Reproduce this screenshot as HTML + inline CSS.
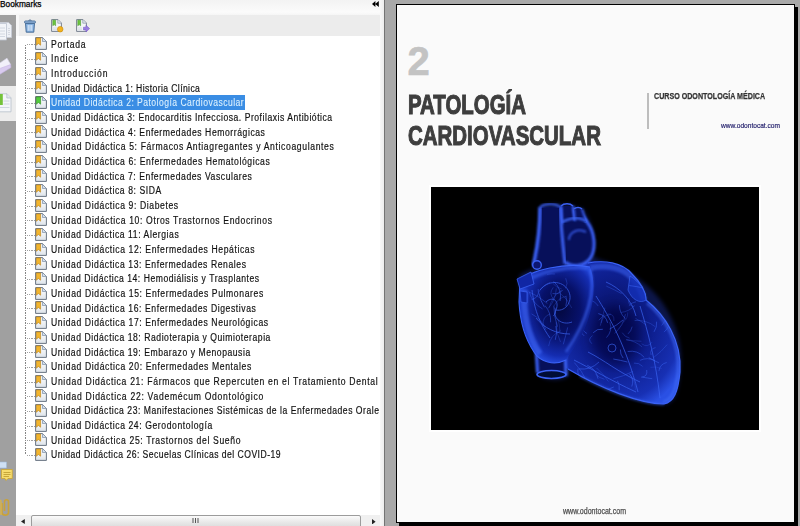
<!DOCTYPE html>
<html><head><meta charset="utf-8">
<style>
*{margin:0;padding:0;box-sizing:border-box}
html,body{width:800px;height:526px;overflow:hidden;background:#a9a9a9;font-family:"Liberation Sans",sans-serif}
.abs{position:absolute}
#title{left:0;top:0;width:380px;height:15px;background:linear-gradient(#f3f3f3,#fbfbfb 80%,#f6f6f6)}
#title .t{position:absolute;left:0;top:-1.2px;font-size:8.3px;color:#000;letter-spacing:0;white-space:nowrap;-webkit-text-stroke:0.25px #000}
#strip{left:0;top:15px;width:16px;height:511px;background:#a0a0a0}
#seltab{left:0;top:85.7px;width:16px;height:35.5px;background:#ececec}
#wline{left:16px;top:15px;width:2.5px;height:500px;background:#f7f7f7}
#toolbar{left:18.5px;top:15px;width:361.5px;height:20.5px;background:#ececec}
#list{left:16px;top:35.5px;width:364px;height:479.5px;background:#fff}
#rstrip{left:380px;top:0;width:4px;height:526px;background:linear-gradient(90deg,#f8f8f8,#ededed)}
#dline{left:383.6px;top:0;width:1.2px;height:526px;background:#747474}
.r{position:absolute;left:51.0px;font-size:10px;line-height:11px;color:#111;white-space:nowrap;-webkit-text-stroke:0.18px #111}
.r span{display:inline-block;transform-origin:0 0}
.r.sel{color:#dff3ff;-webkit-text-stroke:0.06px #dff3ff}
#hl{left:50px;top:95px;width:195.4px;height:14.5px;background:#3a8de4}
.ic{position:absolute;left:35.2px}
.hd{position:absolute;left:26.8px;width:8px;height:1px;background:repeating-linear-gradient(90deg,#a2a2a2 0 1.1px,transparent 1.1px 2.2px)}
#vd{position:absolute;left:25px;width:1px;background:repeating-linear-gradient(180deg,#858585 0 1.2px,transparent 1.2px 2.5px)}
#scroll{left:16px;top:515px;width:364px;height:11px;background:#f0f0f0}
#thumb{left:31.2px;top:515.4px;width:329.5px;height:14px;border:1px solid #9c9c9c;border-radius:2px;background:linear-gradient(#fbfbfb,#e9e9e9 50%,#d9d9d9)}
#page{left:396px;top:4px;width:399px;height:519px;border:1px solid #000;background:#fafafa}
#shr{left:795px;top:7px;width:3px;height:519px;background:#000}
#shb{left:399px;top:522.5px;width:399px;height:4px;background:#000}
.ptxt{position:absolute;white-space:nowrap;transform-origin:0 0}
</style></head><body>
<svg width="0" height="0" style="position:absolute">
<defs>
<linearGradient id="pgbg" x1="0" y1="0" x2="0" y2="1"><stop offset="0" stop-color="#fbfcfd"/><stop offset="0.55" stop-color="#eef1f4"/><stop offset="1" stop-color="#dde3ea"/></linearGradient>
<symbol id="bmo" viewBox="0 0 12 13">
<path d="M0.6,0.6 H7.6 L11.4,4.4 V12.4 H0.6 Z" fill="url(#pgbg)" stroke="#5a6676" stroke-width="0.9"/>
<path d="M7.5,0.7 V4.5 H11.3" fill="#d3e0ee" stroke="#7d8ca2" stroke-width="0.7"/>
<path d="M1.3,0.9 H5.6 V8.2 L3.45,6.5 L1.3,8.2 Z" fill="#f2b52e" stroke="#b27a12" stroke-width="0.6"/>
</symbol>
<symbol id="bmg" viewBox="0 0 12 13">
<path d="M0.6,0.6 H7.6 L11.4,4.4 V12.4 H0.6 Z" fill="url(#pgbg)" stroke="#4f5a68" stroke-width="0.9"/>
<path d="M7.5,0.7 V4.5 H11.3" fill="#d3e0ee" stroke="#7d8ca2" stroke-width="0.7"/>
<path d="M1.3,0.9 H5.6 V8.2 L3.45,6.5 L1.3,8.2 Z" fill="#52cc3c" stroke="#2c8a1c" stroke-width="0.6"/>
</symbol>
</defs>
</svg>

<div id="title" class="abs"><div class="t">Bookmarks</div>
<svg class="abs" style="left:372px;top:1.3px" width="7" height="6" viewBox="0 0 7 6"><path d="M0,3 L3.4,0 V6 Z M3.2,3 L6.8,0 V6 Z" fill="#000"/></svg>
</div>
<div id="strip" class="abs"></div>
<div id="seltab" class="abs"></div>
<div id="wline" class="abs"></div>
<div id="toolbar" class="abs"></div>
<div id="list" class="abs"></div>
<div id="rstrip" class="abs"></div>
<div id="dline" class="abs"></div>

<!-- left strip icons -->
<svg class="abs" style="left:0;top:22px" width="13" height="19" viewBox="0 0 13 19">
<path d="M-2,0.5 H8.5 L11.5,3.5 V15.5 H-2 Z" fill="#eef1f6" stroke="#c6ccd6" stroke-width="0.8"/>
<path d="M-3,1.5 H6.5 V18 H-3 Z" fill="#f3f5f9" stroke="#bcc3cf" stroke-width="0.8"/>
<path d="M-2,6 H5 M-2,9 H5 M-2,12 H5 M-2,14.5 H5" stroke="#c9d0dc" stroke-width="0.8"/>
<path d="M9,6 V13" stroke="#aeb6c4" stroke-width="0.8" stroke-dasharray="1 1"/>
</svg>
<svg class="abs" style="left:0;top:56px" width="12" height="22" viewBox="0 0 12 22">
<path d="M-3,9 L7,2.2 L10.6,8.4 L0,15.5 Z" fill="#f2f0fa" stroke="#dcd8ec" stroke-width="0.6"/>
<path d="M-3,13.5 L10.6,8.6 L10.9,11.6 L-3,20 Z" fill="#d9cbef" stroke="#c7b5e6" stroke-width="0.6"/>
</svg>
<svg class="abs" style="left:0;top:92.5px" width="13" height="20" viewBox="0 0 13 20">
<path d="M-2,0.8 H7 L11,4.8 V18.8 H-2 Z" fill="#f4f6f9" stroke="#b8c0cc" stroke-width="0.8"/>
<path d="M6.8,0.8 V5 H11" fill="#e2e7ef" stroke="#a8b2c0" stroke-width="0.6"/>
<path d="M-2,1 H2.8 V12 H-2 Z" fill="#74c23a"/>
<path d="M3.5,8 H9.5 M3.5,11 H9.5 M-2,14.5 H9.5" stroke="#c7cfdb" stroke-width="0.8"/>
</svg>
<svg class="abs" style="left:0;top:461px" width="14" height="20" viewBox="0 0 14 20">
<path d="M-1,1 H6.5 V7 H-1 Z" fill="#cfe0f4" stroke="#9fb8d8" stroke-width="0.6"/>
<path d="M1.5,8.5 H12.3 V17.5 H8 L6,19.5 L5,17.5 H1.5 Z" fill="#f6dc6e" stroke="#c9a431" stroke-width="0.8"/>
<path d="M3.5,11.5 H10.5 M3.5,13.5 H10.5 M3.5,15.5 H9" stroke="#b38f25" stroke-width="0.7"/>
</svg>
<svg class="abs" style="left:0;top:498px" width="12" height="20" viewBox="0 0 12 20">
<path d="M2,5 V14.5 C2,18 8.5,18 8.5,14.5 V4 C8.5,1 4.5,1 4.5,4 V13" fill="none" stroke="#c9a23a" stroke-width="1.6"/>
<path d="M-1,2.5 C1,2 1,2.5 1,4 V17" fill="none" stroke="#d6b24c" stroke-width="1.5"/>
</svg>

<!-- toolbar icons -->
<svg class="abs" style="left:24px;top:19px" width="12" height="14" viewBox="0 0 12 14">
<path d="M4.5,1.6 Q6,0.2 7.5,1.6" fill="none" stroke="#4e6f94" stroke-width="1"/>
<rect x="0.6" y="2" width="10.8" height="2.2" rx="0.8" fill="#9fc1e6" stroke="#3f6591" stroke-width="0.9"/>
<path d="M1.5,4.4 H10.5 L9.8,13.2 H2.2 Z" fill="#86b1e0" stroke="#3f6591" stroke-width="0.9"/>
<path d="M4.2,6 V11.8 M6,6 V11.8 M7.8,6 V11.8" stroke="#eef6ff" stroke-width="0.9"/>
</svg>
<svg class="abs" style="left:50.5px;top:18.8px" width="13" height="14" viewBox="0 0 13 14">
<path d="M0.6,0.6 H7 L10.4,4 V12.4 H0.6 Z" fill="#f3f5f8" stroke="#6b7585" stroke-width="0.9"/>
<path d="M6.8,0.7 V4.2 H10.3" fill="#dfe6ee" stroke="#8b96a6" stroke-width="0.7"/>
<path d="M1.8,1.2 H4.6 V6.8 L3.2,5.6 L1.8,6.8 Z" fill="#6cc63d" stroke="#3f8e22" stroke-width="0.5"/>
<path d="M1.8,9 H6 M1.8,10.8 H6" stroke="#c6ced8" stroke-width="0.7"/>
<circle cx="9.2" cy="10.2" r="2.8" fill="#f2b21e" stroke="#c68a0a" stroke-width="0.6"/>
</svg>
<svg class="abs" style="left:75.8px;top:18.8px" width="14" height="14" viewBox="0 0 14 14">
<path d="M0.6,0.6 H7 L10.4,4 V12.4 H0.6 Z" fill="#f3f5f8" stroke="#6b7585" stroke-width="0.9"/>
<path d="M6.8,0.7 V4.2 H10.3" fill="#dfe6ee" stroke="#8b96a6" stroke-width="0.7"/>
<path d="M1.8,1.2 H4.6 V6.8 L3.2,5.6 L1.8,6.8 Z" fill="#6cc63d" stroke="#3f8e22" stroke-width="0.5"/>
<path d="M1.8,9 H6 M1.8,10.8 H6" stroke="#c6ced8" stroke-width="0.7"/>
<path d="M7.5,8.2 H10 V6.2 L13.6,9.6 L10,13 V11 H7.5 Z" fill="#9a7ee0" stroke="#7152c4" stroke-width="0.5"/>
</svg>

<div id="hl" class="abs"></div>
<div id="vd" style="top:44.70px;height:410.76px"></div>
<div id="clip" class="abs" style="left:0;top:0;width:380px;height:515px;overflow:hidden">
<div class="hd" style="top:44.20px"></div>
<div class="hd" style="top:58.87px"></div>
<div class="hd" style="top:73.54px"></div>
<div class="hd" style="top:88.21px"></div>
<div class="hd" style="top:102.88px"></div>
<div class="hd" style="top:117.55px"></div>
<div class="hd" style="top:132.22px"></div>
<div class="hd" style="top:146.89px"></div>
<div class="hd" style="top:161.56px"></div>
<div class="hd" style="top:176.23px"></div>
<div class="hd" style="top:190.90px"></div>
<div class="hd" style="top:205.57px"></div>
<div class="hd" style="top:220.24px"></div>
<div class="hd" style="top:234.91px"></div>
<div class="hd" style="top:249.58px"></div>
<div class="hd" style="top:264.25px"></div>
<div class="hd" style="top:278.92px"></div>
<div class="hd" style="top:293.59px"></div>
<div class="hd" style="top:308.26px"></div>
<div class="hd" style="top:322.93px"></div>
<div class="hd" style="top:337.60px"></div>
<div class="hd" style="top:352.27px"></div>
<div class="hd" style="top:366.94px"></div>
<div class="hd" style="top:381.61px"></div>
<div class="hd" style="top:396.28px"></div>
<div class="hd" style="top:410.95px"></div>
<div class="hd" style="top:425.62px"></div>
<div class="hd" style="top:440.29px"></div>
<div class="hd" style="top:454.96px"></div>
<svg class="ic" style="top:37.30px" width="12" height="13" viewBox="0 0 12 13"><use href="#bmo"/></svg>
<svg class="ic" style="top:51.97px" width="12" height="13" viewBox="0 0 12 13"><use href="#bmo"/></svg>
<svg class="ic" style="top:66.64px" width="12" height="13" viewBox="0 0 12 13"><use href="#bmo"/></svg>
<svg class="ic" style="top:81.31px" width="12" height="13" viewBox="0 0 12 13"><use href="#bmo"/></svg>
<svg class="ic" style="top:95.98px" width="12" height="13" viewBox="0 0 12 13"><use href="#bmg"/></svg>
<svg class="ic" style="top:110.65px" width="12" height="13" viewBox="0 0 12 13"><use href="#bmo"/></svg>
<svg class="ic" style="top:125.32px" width="12" height="13" viewBox="0 0 12 13"><use href="#bmo"/></svg>
<svg class="ic" style="top:139.99px" width="12" height="13" viewBox="0 0 12 13"><use href="#bmo"/></svg>
<svg class="ic" style="top:154.66px" width="12" height="13" viewBox="0 0 12 13"><use href="#bmo"/></svg>
<svg class="ic" style="top:169.33px" width="12" height="13" viewBox="0 0 12 13"><use href="#bmo"/></svg>
<svg class="ic" style="top:184.00px" width="12" height="13" viewBox="0 0 12 13"><use href="#bmo"/></svg>
<svg class="ic" style="top:198.67px" width="12" height="13" viewBox="0 0 12 13"><use href="#bmo"/></svg>
<svg class="ic" style="top:213.34px" width="12" height="13" viewBox="0 0 12 13"><use href="#bmo"/></svg>
<svg class="ic" style="top:228.01px" width="12" height="13" viewBox="0 0 12 13"><use href="#bmo"/></svg>
<svg class="ic" style="top:242.68px" width="12" height="13" viewBox="0 0 12 13"><use href="#bmo"/></svg>
<svg class="ic" style="top:257.35px" width="12" height="13" viewBox="0 0 12 13"><use href="#bmo"/></svg>
<svg class="ic" style="top:272.02px" width="12" height="13" viewBox="0 0 12 13"><use href="#bmo"/></svg>
<svg class="ic" style="top:286.69px" width="12" height="13" viewBox="0 0 12 13"><use href="#bmo"/></svg>
<svg class="ic" style="top:301.36px" width="12" height="13" viewBox="0 0 12 13"><use href="#bmo"/></svg>
<svg class="ic" style="top:316.03px" width="12" height="13" viewBox="0 0 12 13"><use href="#bmo"/></svg>
<svg class="ic" style="top:330.70px" width="12" height="13" viewBox="0 0 12 13"><use href="#bmo"/></svg>
<svg class="ic" style="top:345.37px" width="12" height="13" viewBox="0 0 12 13"><use href="#bmo"/></svg>
<svg class="ic" style="top:360.04px" width="12" height="13" viewBox="0 0 12 13"><use href="#bmo"/></svg>
<svg class="ic" style="top:374.71px" width="12" height="13" viewBox="0 0 12 13"><use href="#bmo"/></svg>
<svg class="ic" style="top:389.38px" width="12" height="13" viewBox="0 0 12 13"><use href="#bmo"/></svg>
<svg class="ic" style="top:404.05px" width="12" height="13" viewBox="0 0 12 13"><use href="#bmo"/></svg>
<svg class="ic" style="top:418.72px" width="12" height="13" viewBox="0 0 12 13"><use href="#bmo"/></svg>
<svg class="ic" style="top:433.39px" width="12" height="13" viewBox="0 0 12 13"><use href="#bmo"/></svg>
<svg class="ic" style="top:448.06px" width="12" height="13" viewBox="0 0 12 13"><use href="#bmo"/></svg>
<div class="r" style="top:38.53px"><span style="transform:scaleX(0.8600);letter-spacing:0.849px">Portada</span></div>
<div class="r" style="top:53.20px"><span style="transform:scaleX(0.8600);letter-spacing:1.012px">Indice</span></div>
<div class="r" style="top:67.88px"><span style="transform:scaleX(0.8600);letter-spacing:1.020px">Introducción</span></div>
<div class="r" style="top:82.55px"><span style="transform:scaleX(0.8600);letter-spacing:0.469px">Unidad Didáctica 1: Historia Clínica</span></div>
<div class="r sel" style="top:97.21px"><span style="transform:scaleX(0.8600);letter-spacing:0.531px">Unidad Didáctica 2: Patología Cardiovascular</span></div>
<div class="r" style="top:111.88px"><span style="transform:scaleX(0.8600);letter-spacing:0.607px">Unidad Didáctica 3: Endocarditis Infecciosa. Profilaxis Antibiótica</span></div>
<div class="r" style="top:126.56px"><span style="transform:scaleX(0.8600);letter-spacing:0.663px">Unidad Didáctica 4: Enfermedades Hemorrágicas</span></div>
<div class="r" style="top:141.22px"><span style="transform:scaleX(0.8600);letter-spacing:0.737px">Unidad Didáctica 5: Fármacos Antiagregantes y Anticoagulantes</span></div>
<div class="r" style="top:155.90px"><span style="transform:scaleX(0.8600);letter-spacing:0.686px">Unidad Didáctica 6: Enfermedades Hematológicas</span></div>
<div class="r" style="top:170.57px"><span style="transform:scaleX(0.8600);letter-spacing:0.656px">Unidad Didáctica 7: Enfermedades Vasculares</span></div>
<div class="r" style="top:185.23px"><span style="transform:scaleX(0.8600);letter-spacing:0.666px">Unidad Didáctica 8: SIDA</span></div>
<div class="r" style="top:199.91px"><span style="transform:scaleX(0.8600);letter-spacing:0.697px">Unidad Didáctica 9: Diabetes</span></div>
<div class="r" style="top:214.58px"><span style="transform:scaleX(0.8600);letter-spacing:0.737px">Unidad Didáctica 10: Otros Trastornos Endocrinos</span></div>
<div class="r" style="top:229.25px"><span style="transform:scaleX(0.8600);letter-spacing:0.664px">Unidad Didáctica 11: Alergias</span></div>
<div class="r" style="top:243.91px"><span style="transform:scaleX(0.8600);letter-spacing:0.697px">Unidad Didáctica 12: Enfermedades Hepáticas</span></div>
<div class="r" style="top:258.59px"><span style="transform:scaleX(0.8600);letter-spacing:0.680px">Unidad Didáctica 13: Enfermedades Renales</span></div>
<div class="r" style="top:273.26px"><span style="transform:scaleX(0.8600);letter-spacing:0.606px">Unidad Didáctica 14: Hemodiálisis y Trasplantes</span></div>
<div class="r" style="top:287.93px"><span style="transform:scaleX(0.8600);letter-spacing:0.710px">Unidad Didáctica 15: Enfermedades Pulmonares</span></div>
<div class="r" style="top:302.60px"><span style="transform:scaleX(0.8600);letter-spacing:0.678px">Unidad Didáctica 16: Enfermedades Digestivas</span></div>
<div class="r" style="top:317.27px"><span style="transform:scaleX(0.8600);letter-spacing:0.693px">Unidad Didáctica 17: Enfermedades Neurológicas</span></div>
<div class="r" style="top:331.94px"><span style="transform:scaleX(0.8600);letter-spacing:0.636px">Unidad Didáctica 18: Radioterapia y Quimioterapia</span></div>
<div class="r" style="top:346.61px"><span style="transform:scaleX(0.8600);letter-spacing:0.633px">Unidad Didáctica 19: Embarazo y Menopausia</span></div>
<div class="r" style="top:361.28px"><span style="transform:scaleX(0.8600);letter-spacing:0.716px">Unidad Didáctica 20: Enfermedades Mentales</span></div>
<div class="r" style="top:375.95px"><span style="transform:scaleX(0.8600);letter-spacing:0.803px">Unidad Didáctica 21: Fármacos que Repercuten en el Tratamiento Dental</span></div>
<div class="r" style="top:390.62px"><span style="transform:scaleX(0.8600);letter-spacing:0.823px">Unidad Didáctica 22: Vademécum Odontológico</span></div>
<div class="r" style="top:405.29px"><span style="transform:scaleX(0.8600);letter-spacing:0.612px">Unidad Didáctica 23: Manifestaciones Sistémicas de la Enfermedades Orale</span></div>
<div class="r" style="top:419.96px"><span style="transform:scaleX(0.8600);letter-spacing:0.690px">Unidad Didáctica 24: Gerodontología</span></div>
<div class="r" style="top:434.62px"><span style="transform:scaleX(0.8600);letter-spacing:0.756px">Unidad Didáctica 25: Trastornos del Sueño</span></div>
<div class="r" style="top:449.30px"><span style="transform:scaleX(0.8600);letter-spacing:0.546px">Unidad Didáctica 26: Secuelas Clínicas del COVID-19</span></div>
</div>

<div id="scroll" class="abs">
</div>
<div id="thumb" class="abs"></div>
<svg class="abs" style="left:20.8px;top:518.6px" width="4" height="5" viewBox="0 0 4 5"><path d="M0,2.5 L3.8,0 V5 Z" fill="#222"/></svg>
<svg class="abs" style="left:372px;top:518.7px" width="4" height="5.5" viewBox="0 0 4 5.5"><path d="M3.6,2.7 L0,0 V5.5 Z" fill="#222"/></svg>
<svg class="abs" style="left:191.5px;top:517.5px" width="8" height="5" viewBox="0 0 8 5"><path d="M1,0 V5 M3.5,0 V5 M6,0 V5" stroke="#555" stroke-width="1"/></svg>

<!-- page -->
<div id="shr" class="abs"></div>
<div id="shb" class="abs"></div>
<div id="page" class="abs"></div>

<div class="ptxt" style="left:407.6px;top:40.7px;font-size:40px;font-weight:bold;color:#c3c3c3;line-height:40px;-webkit-text-stroke:0.6px #c3c3c3">2</div>
<div class="ptxt" style="left:407.6px;top:92.2px;font-size:27px;font-weight:bold;color:#3e3e3e;line-height:27px;transform:scaleX(0.756);-webkit-text-stroke:1.1px #3e3e3e">PATOLOGÍA</div>
<div class="ptxt" style="left:407.6px;top:123.2px;font-size:27px;font-weight:bold;color:#3e3e3e;line-height:27px;transform:scaleX(0.758);-webkit-text-stroke:1.1px #3e3e3e">CARDIOVASCULAR</div>
<div class="abs" style="left:647.3px;top:92.5px;width:2px;height:36.5px;background:#bdbdbd"></div>
<div class="ptxt" style="left:654px;top:91.5px;font-size:9.2px;font-weight:bold;color:#333;line-height:9px;transform:scaleX(0.775);-webkit-text-stroke:0.25px #333">CURSO ODONTOLOGÍA MÉDICA</div>
<div class="ptxt" style="left:721px;top:120.6px;font-size:8px;color:#26236e;line-height:9px;transform:scaleX(0.824);-webkit-text-stroke:0.2px #26236e">www.odontocat.com</div>
<div class="ptxt" style="left:563.2px;top:506.6px;font-size:8.2px;color:#505050;line-height:9px;transform:scaleX(0.861);-webkit-text-stroke:0.25px #505050">www.odontocat.com</div>

<!-- image -->
<div class="abs" style="left:429px;top:185px;width:332px;height:247px;background:#fff"></div>
<svg class="abs" style="left:431px;top:187px" width="328" height="243" viewBox="431 187 328 243">
<defs>
<clipPath id="cv"><path d="M584,262 C600,260 622,262 632,274 C640,282 646,292 646,300 C664,314 682,340 680,372 C678,392 674,402 664,404 C640,404 600,388 566,368 C556,350 560,320 566,300 C572,284 576,270 584,262 Z"/></clipPath>
<clipPath id="ca"><path d="M520,281 C530,270 566,262 590,267 C597,284 593,312 583,332 C577,344 571,352 566,360 C554,366 540,362 534,352 C526,340 520,322 519,302 Z"/></clipPath>
<filter id="glow" x="-20%" y="-20%" width="140%" height="140%"><feGaussianBlur stdDeviation="2"/></filter>
<filter id="b1" x="-20%" y="-20%" width="140%" height="140%"><feGaussianBlur stdDeviation="0.55"/></filter>
<filter id="b2" x="-20%" y="-20%" width="140%" height="140%"><feGaussianBlur stdDeviation="1.3"/></filter>
<filter id="b3" x="-30%" y="-30%" width="160%" height="160%"><feGaussianBlur stdDeviation="3.5"/></filter>
<filter id="b6" x="-30%" y="-30%" width="160%" height="160%"><feGaussianBlur stdDeviation="6"/></filter>
<radialGradient id="gv" cx="0.45" cy="0.42" r="0.66"><stop offset="0" stop-color="#070f5c"/><stop offset="0.5" stop-color="#0e1f90"/><stop offset="0.85" stop-color="#1730b4"/><stop offset="1" stop-color="#2a50e4"/></radialGradient>
<radialGradient id="gaa" cx="0.55" cy="0.45" r="0.6"><stop offset="0" stop-color="#030840"/><stop offset="0.45" stop-color="#07116a"/><stop offset="0.8" stop-color="#142cb0"/><stop offset="1" stop-color="#2c56f0"/></radialGradient>
</defs>
<rect x="431" y="187" width="328" height="243" fill="#000"/>
<!-- glow silhouette -->
<path filter="url(#glow)" opacity="0.3" fill="#2a48f0" d="M541,206 C548,203 556,203 560,205 C568,203 574,204 576,208 C580,207 585,209 585,213 C592,222 596,238 593,256 C600,262 615,262 628,272 C645,282 660,296 668,312 C678,330 683,350 680,372 C678,390 676,402 666,404 C648,404 630,396 610,386 C595,378 580,372 569,368 L569,376 C562,381 545,381 539,375 L537,350 C530,340 522,322 521,300 C519,290 518,280 520,275 C525,272 530,270 534,269 C536,262 538,240 541,206 Z"/>

<!-- ventricles -->
<path d="M584,262 C600,260 622,262 632,274 C640,282 646,292 646,300 C664,314 682,340 680,372 C678,392 674,402 664,404 C640,404 600,388 566,368 C556,350 560,320 566,300 C572,284 576,270 584,262 Z" fill="url(#gv)"/>
<path d="M588,263 C604,260 622,262 632,274 C640,282 646,292 646,300 C664,314 682,340 680,372 C678,392 674,402 664,404 C640,404 600,388 568,369" fill="none" stroke="#3a62f8" stroke-width="1.2"/>
<path d="M590,268 C606,264 624,268 632,278 C638,285 642,292 644,300" fill="none" stroke="#3f68f8" stroke-width="6" filter="url(#b2)" opacity="0.5"/>
<path d="M630,276 C640,282 646,292 646,300 C640,304 632,300 628,290 Z" fill="#1430b8" stroke="#3a64f4" stroke-width="0.8" opacity="0.8"/>
<ellipse cx="616" cy="336" rx="24" ry="30" fill="#02063a" filter="url(#b6)" opacity="0.6"/>
<path d="M647,303 C666,318 680,344 678,372 C676,390 672,400 663,402" fill="none" stroke="#4470fa" stroke-width="3" filter="url(#b2)" opacity="0.5"/>
<path d="M664,404 C640,404 610,392 580,376" fill="none" stroke="#3a64f4" stroke-width="3" filter="url(#b2)" opacity="0.45"/>
<g clip-path="url(#cv)"><g fill="none" stroke="#3a64f4" stroke-width="0.7" filter="url(#b1)">
<path d="M606.3,286.1 Q614.1,289.5 621.6,293.6" opacity="0.51"/>
<path d="M617.5,380.8 Q619.9,385.3 619.2,390.4" opacity="0.78"/>
<path d="M634.6,320.5 Q646.2,319.5 655.4,326.8" opacity="0.48"/>
<path d="M604.5,379.3 Q599.1,378.1 595.4,374.1" opacity="0.52"/>
<path d="M646.2,324.9 Q641.2,321.2 635.6,318.5" opacity="0.48"/>
<path d="M659.0,362.9 Q653.7,360.6 648.8,357.7" opacity="0.74"/>
<path d="M651.7,305.3 Q659.0,313.4 667.7,320.0" opacity="0.69"/>
<path d="M587.0,333.5 Q582.2,331.3 582.8,326.0" opacity="0.61"/>
<path d="M668.1,308.9 Q660.2,304.8 653.3,299.0" opacity="0.56"/>
<path d="M623.1,358.0 Q620.1,354.3 620.4,349.5" opacity="0.80"/>
<path d="M662.1,304.8 Q663.8,296.2 655.5,293.2" opacity="0.56"/>
<path d="M613.8,387.0 Q609.6,389.0 605.1,389.9" opacity="0.75"/>
<path d="M601.2,323.1 Q602.4,314.7 610.9,314.5" opacity="0.42"/>
<path d="M636.0,301.8 Q631.7,302.4 628.9,305.7" opacity="0.60"/>
<path d="M627.7,351.5 Q637.6,349.8 644.2,357.3" opacity="0.70"/>
<path d="M613.9,320.9 Q614.7,313.8 607.7,313.8" opacity="0.38"/>
<path d="M581.4,315.9 Q583.3,312.0 587.2,310.0" opacity="0.42"/>
<path d="M598.3,313.6 Q605.9,315.2 607.6,322.8" opacity="0.80"/>
<path d="M622.2,332.7 Q624.7,337.0 629.6,338.2" opacity="0.47"/>
<path d="M629.2,285.5 Q636.9,286.5 644.5,288.2" opacity="0.79"/>
<path d="M666.7,362.5 Q659.8,364.1 658.9,371.1" opacity="0.70"/>
<path d="M629.7,374.1 Q634.4,379.7 631.8,386.5" opacity="0.79"/>
<path d="M661.7,368.6 Q656.3,366.2 650.5,367.3" opacity="0.36"/>
<path d="M599.0,362.0 Q590.6,370.4 578.8,368.9" opacity="0.79"/>
<path d="M677.0,316.0 Q674.2,322.1 678.6,327.0" opacity="0.44"/>
<path d="M664.1,332.1 Q671.5,325.5 669.4,315.8" opacity="0.65"/>
<path d="M654.0,331.9 Q657.2,327.3 656.6,321.7" opacity="0.71"/>
<path d="M651.2,288.8 Q658.0,289.9 656.9,296.8" opacity="0.71"/>
<path d="M586.4,380.7 Q581.9,370.7 574.4,362.6" opacity="0.60"/>
<path d="M598.2,306.0 Q594.8,300.6 588.5,300.1" opacity="0.54"/>
<path d="M609.6,329.1 Q616.8,325.4 623.0,320.0" opacity="0.76"/>
<path d="M626.2,339.5 Q633.7,341.1 641.4,341.3" opacity="0.43"/>
<path d="M606.5,337.6 Q612.8,330.9 609.9,322.2" opacity="0.60"/>
<path d="M632.9,371.4 Q623.7,376.3 613.4,378.7" opacity="0.58"/>
<path d="M627.4,362.0 Q620.4,360.2 613.3,359.0" opacity="0.77"/>
<path d="M583.6,326.9 Q578.8,331.7 584.2,335.9" opacity="0.65"/>
<path d="M587.3,365.3 Q596.3,369.1 598.0,378.7" opacity="0.79"/>
<path d="M614.6,333.2 Q623.5,325.7 625.4,314.2" opacity="0.54"/>
<path d="M627.7,312.5 Q627.9,318.5 623.3,322.2" opacity="0.36"/>
<path d="M632.1,326.7 Q631.3,331.0 628.0,333.9" opacity="0.58"/>
<path d="M633.9,363.1 Q639.0,362.6 642.6,366.3" opacity="0.54"/>
<path d="M641.1,377.2 Q648.0,376.8 646.7,370.0" opacity="0.74"/>
<path d="M620.8,312.5 Q629.1,311.5 634.9,305.5" opacity="0.41"/>
<path d="M629.0,298.4 Q626.9,305.3 634.0,306.5" opacity="0.44"/>
<path d="M604.9,307.7 Q602.6,316.7 600.3,325.7" opacity="0.43"/>
<path d="M652.1,342.1 Q647.7,348.1 641.6,343.8" opacity="0.40"/>
<path d="M661.7,325.5 Q666.6,319.7 669.3,312.6" opacity="0.58"/>
<path d="M608.4,381.5 Q603.4,374.0 596.6,368.0" opacity="0.51"/>
<path d="M577.9,368.7 Q576.7,376.3 583.9,378.6" opacity="0.73"/>
<path d="M602.8,329.3 Q597.1,328.3 593.2,332.7" opacity="0.78"/>
<path d="M604.7,314.9 Q601.5,317.4 598.8,320.3" opacity="0.58"/>
<path d="M592.5,335.7 Q587.2,339.2 591.8,343.7" opacity="0.53"/>
<path d="M654.1,357.1 Q661.5,351.8 667.1,344.6" opacity="0.50"/>
<path d="M651.1,355.1 Q649.3,348.9 655.5,347.6" opacity="0.63"/>
<path d="M652.2,378.7 Q647.3,378.0 642.4,377.2" opacity="0.73"/>
<path d="M635.4,390.0 Q635.4,380.6 629.3,373.5" opacity="0.36"/>
<path d="M584.9,315.5 Q586.7,311.1 589.8,307.4" opacity="0.63"/>
<path d="M640.1,360.3 Q647.6,356.9 655.0,360.6" opacity="0.69"/>
<path d="M626.3,339.9 Q635.4,340.8 642.1,346.9" opacity="0.46"/>
<path d="M625.3,318.6 Q619.4,313.1 619.4,305.1" opacity="0.63"/>
</g></g>
<g fill="none" stroke="#3c66f6" stroke-width="0.9" filter="url(#b1)" opacity="0.75">
<path d="M596,296 C610,318 626,346 638,392"/>
<path d="M640,306 C648,332 656,362 660,398"/>
<path d="M588,352 C604,360 618,372 640,382"/>
<path d="M606,282 C620,288 632,300 636,316"/>
<path d="M574,360 C590,368 610,380 636,392"/>
</g>
<circle cx="612" cy="348" r="4" fill="none" stroke="#3a64f4" stroke-width="0.9" opacity="0.7"/>

<!-- aortic arch -->
<path d="M562,218 C570,213 582,212 587,222 C595,232 596,248 591,257 C586,266 572,268 565,262 C563,248 562,232 562,218 Z" fill="#07105a"/>
<path d="M562,218 C570,213 582,212 587,222 C595,232 596,248 591,257 C586,266 572,268 565,262" fill="none" stroke="#3a60f4" stroke-width="3" filter="url(#b2)"/>
<path d="M569,240 C569,232 578,228 586,232" fill="none" stroke="#3a60f4" stroke-width="2" filter="url(#b2)" opacity="0.8"/>
<!-- branches -->
<path d="M561,206 L573,206 L575,222 L562,224 Z" fill="#08115c"/>
<path d="M561,206 L562,224 M573,206 L575,220" fill="none" stroke="#3a60f4" stroke-width="2.5" filter="url(#b2)"/>
<path d="M574,209 L582,209 L586,222 L575,222 Z" fill="#08115c"/>
<path d="M574,209 L575,221 M582,209 L586,221" fill="none" stroke="#3a60f4" stroke-width="2" filter="url(#b2)"/>
<path d="M561,206 C564,203 570,203 573,206 M574,209 C576,207 580,207 582,209" fill="none" stroke="#3a60f4" stroke-width="1.5" filter="url(#b1)"/>
<path d="M562,222 C570,218 580,216 587,222" fill="none" stroke="#3e68f6" stroke-width="2.2" filter="url(#b2)"/>
<!-- SVC -->
<path d="M540,207 C540,230 537,250 533,266 L550,274 L565,264 C563,246 561,226 560,207 Z" fill="#07105a"/>
<path d="M540,207 C540,230 537,250 533,266" fill="none" stroke="#3a60f4" stroke-width="3.5" filter="url(#b2)"/>
<path d="M560,207 C561,226 563,246 565,264" fill="none" stroke="#3a60f4" stroke-width="3" filter="url(#b2)"/>
<path d="M540,207 C546,203 555,203 560,207" fill="none" stroke="#3a60f4" stroke-width="2" filter="url(#b2)"/>
<!-- node -->
<circle cx="537" cy="265" r="4.3" fill="#0a1470" stroke="#3a60f4" stroke-width="1.4" filter="url(#b1)"/>

<!-- IVC -->
<path d="M536,345 L537.5,373 C545,380 560,381 566,376 L565,350 Z" fill="#07105a"/>
<path d="M536,348 L537.5,373 M565,352 L566,376" fill="none" stroke="#3a60f4" stroke-width="3" filter="url(#b2)"/>
<ellipse cx="551.5" cy="374.5" rx="14.5" ry="4" fill="#040834" stroke="#3a64f4" stroke-width="1.6" filter="url(#b1)"/>

<!-- atria -->
<path d="M520,281 C530,270 566,262 590,267 C597,284 593,312 583,332 C577,344 571,352 566,360 C554,366 540,362 534,352 C526,340 520,322 519,302 Z" fill="url(#gaa)"/>
<path d="M566,360 C554,366 540,362 534,352 C526,340 520,322 519,302 L520,281 C530,270 566,262 590,267" fill="none" stroke="#3a62f6" stroke-width="1.1"/>
<path d="M525,290 C523,312 527,334 540,354" fill="none" stroke="#3f68f8" stroke-width="6" filter="url(#b2)" opacity="0.6"/>
<path d="M524,282 C540,272 566,266 588,268" fill="none" stroke="#3f68f8" stroke-width="4" filter="url(#b2)" opacity="0.5"/>
<path d="M590,269 C596,290 588,320 566,352" fill="none" stroke="#3f68f8" stroke-width="3" filter="url(#b2)" opacity="0.55"/>
<path d="M517,279 L531,272 L534,284 L520,289 Z" fill="#1026a4" stroke="#3a62f4" stroke-width="0.8"/>
<path d="M520,291 L527,292 L527,303 L521,302 Z" fill="#1026a4" stroke="#3a62f4" stroke-width="0.7"/>
<g fill="none" stroke="#3c66f6" stroke-width="0.9" filter="url(#b1)" opacity="0.75">
<path d="M540,290 C548,280 562,280 568,290 C574,300 566,312 556,310"/>
<path d="M546,302 C552,296 560,300 556,310 C552,318 562,326 572,322"/>
<path d="M536,318 C544,328 556,334 570,334"/>
<path d="M532,290 C534,304 536,318 550,338"/>
</g>
<g clip-path="url(#ca)"><g fill="none" stroke="#3a64f4" stroke-width="0.7" filter="url(#b1)">
<path d="M565.7,278.2 Q568.5,283.3 565.5,288.3" opacity="0.49"/>
<path d="M567.7,327.4 Q565.7,335.9 563.3,344.3" opacity="0.56"/>
<path d="M553.7,281.5 Q562.4,289.4 560.1,301.0" opacity="0.77"/>
<path d="M552.6,293.5 Q558.9,294.9 562.9,289.8" opacity="0.61"/>
<path d="M531.6,313.9 Q541.7,319.2 546.0,329.7" opacity="0.58"/>
<path d="M555.1,274.0 Q551.0,273.6 547.0,274.4" opacity="0.49"/>
<path d="M531.6,299.5 Q539.9,297.5 538.2,289.0" opacity="0.69"/>
<path d="M547.3,303.4 Q538.9,296.2 528.7,291.7" opacity="0.54"/>
<path d="M539.0,293.3 Q540.3,300.9 544.5,307.3" opacity="0.78"/>
<path d="M571.8,308.1 Q568.1,299.2 560.4,293.5" opacity="0.37"/>
<path d="M554.1,299.5 Q548.0,293.8 553.3,287.4" opacity="0.47"/>
<path d="M566.6,296.1 Q557.9,297.8 554.2,305.8" opacity="0.42"/>
<path d="M552.6,283.2 Q556.1,287.6 561.6,288.9" opacity="0.39"/>
<path d="M538.3,292.7 Q542.4,285.2 550.4,282.3" opacity="0.54"/>
<path d="M550.1,313.9 Q542.2,316.8 543.2,325.2" opacity="0.47"/>
<path d="M556.2,322.4 Q555.7,332.8 560.5,342.0" opacity="0.46"/>
<path d="M549.2,307.7 Q551.7,296.4 561.6,290.3" opacity="0.36"/>
<path d="M548.6,346.1 Q550.2,335.0 560.7,330.7" opacity="0.46"/>
<path d="M557.5,326.6 Q553.9,316.5 553.8,305.7" opacity="0.69"/>
<path d="M553.1,316.1 Q557.1,312.6 554.8,307.7" opacity="0.76"/>
<path d="M565.9,296.3 Q567.5,301.2 565.8,306.1" opacity="0.66"/>
<path d="M557.7,318.6 Q560.0,325.1 559.9,331.9" opacity="0.35"/>
<path d="M542.5,308.9 Q532.3,303.2 529.3,292.0" opacity="0.56"/>
<path d="M555.9,326.0 Q557.6,333.0 555.3,339.8" opacity="0.77"/>
<path d="M545.0,305.6 Q551.2,312.8 550.6,322.3" opacity="0.68"/>
<path d="M556.3,288.4 Q555.8,299.9 548.2,308.4" opacity="0.45"/>
</g></g>
</svg>

</body></html>
